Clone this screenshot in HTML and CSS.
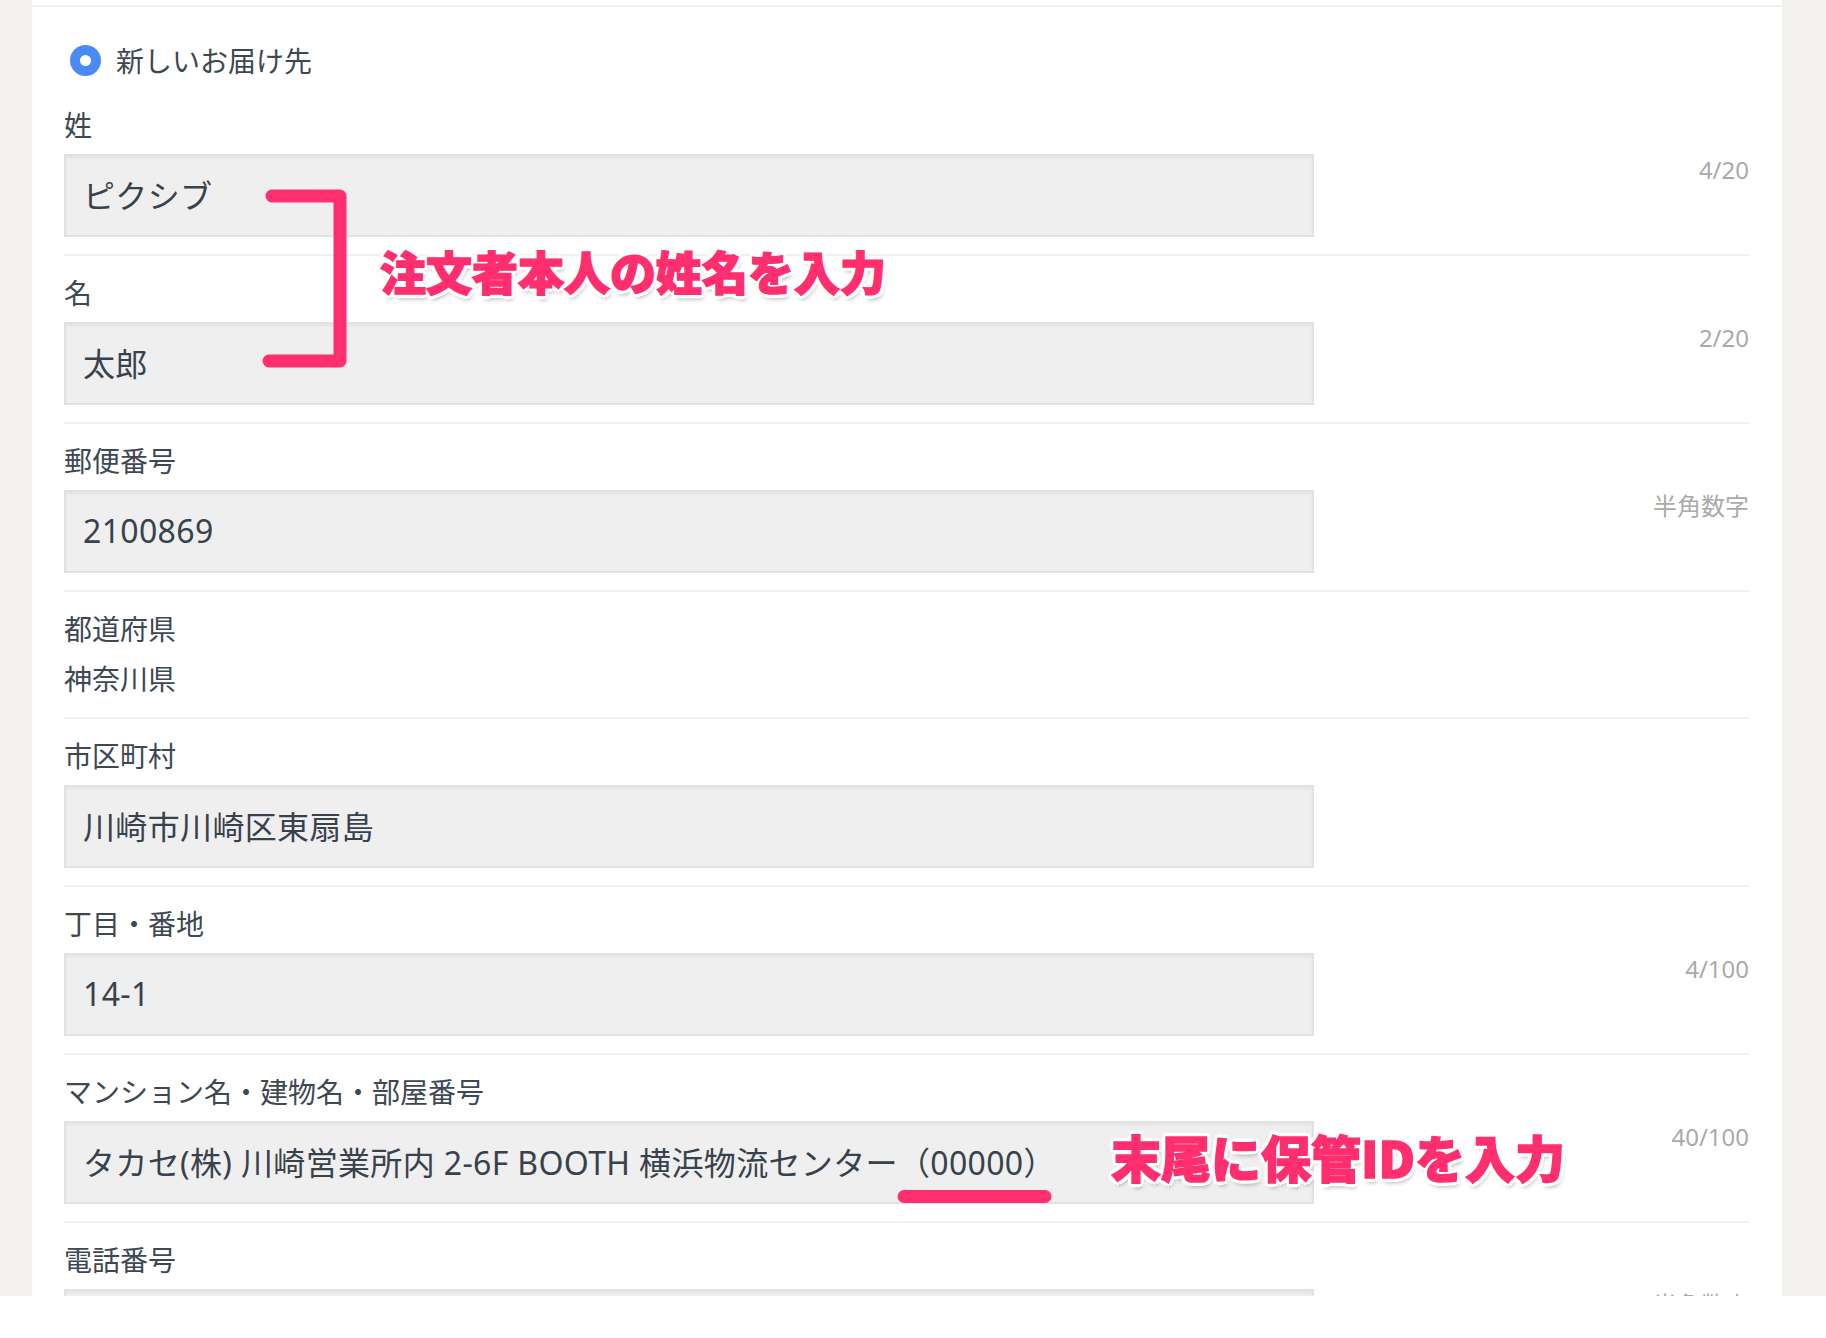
FILE: index.html
```html
<!DOCTYPE html>
<html lang="ja">
<head>
<meta charset="utf-8">
<title>お届け先</title>
<link rel="stylesheet" href="styles.css">
</head>
<body>
<div class="viewport">
  <div class="panel">
    <div class="top-rule"></div>
    <div class="form">
      <div class="radio-row">
        <span class="radio"><span class="radio-dot"></span></span>
        <span class="radio-label">新しいお届け先</span>
      </div>

      <div class="field">
        <div class="label">姓</div>
        <div class="input-row">
          <input class="input" type="text" value="ピクシブ">
          <span class="counter">4/20</span>
        </div>
      </div>

      <div class="field">
        <div class="label">名</div>
        <div class="input-row">
          <input class="input" type="text" value="太郎">
          <span class="counter">2/20</span>
        </div>
      </div>

      <div class="field">
        <div class="label">郵便番号</div>
        <div class="input-row">
          <input class="input" type="text" value="2100869">
          <span class="counter">半角数字</span>
        </div>
      </div>

      <div class="field field-static">
        <div class="label">都道府県</div>
        <div class="value">神奈川県</div>
      </div>

      <div class="field">
        <div class="label">市区町村</div>
        <div class="input-row">
          <input class="input" type="text" value="川崎市川崎区東扇島">
        </div>
      </div>

      <div class="field">
        <div class="label">丁目・番地</div>
        <div class="input-row">
          <input class="input" type="text" value="14-1">
          <span class="counter">4/100</span>
        </div>
      </div>

      <div class="field">
        <div class="label">マンション名・建物名・部屋番号</div>
        <div class="input-row">
          <input class="input" type="text" value="タカセ(株) 川崎営業所内 2-6F BOOTH 横浜物流センター（00000）">
          <span class="counter">40/100</span>
        </div>
      </div>

      <div class="field">
        <div class="label">電話番号</div>
        <div class="input-row">
          <input class="input" type="text" value="">
          <span class="counter">半角数字</span>
        </div>
      </div>
    </div>
  </div>

  <svg class="marks" width="1826" height="1296" viewBox="0 0 1826 1296" aria-hidden="true">
    <path d="M272 196 H340 V361 H269" fill="none" stroke="#ff2e6f" stroke-width="13" stroke-linecap="round" stroke-linejoin="round"/>
    <line x1="904" y1="1196.5" x2="1045" y2="1196.5" stroke="#ff2e6f" stroke-width="13" stroke-linecap="round"/>
  </svg>
  <div class="note note-name">注文者本人の姓名を入力</div>
  <div class="note note-id">末尾に保管IDを入力</div>
</div>
</body>
</html>
```

FILE: styles.css
```css
html, body {
  margin: 0;
  padding: 0;
  background: #ffffff;
}

body {
  font-family: "Noto Sans CJK JP", "Noto Sans", sans-serif;
  color: #3d4852;
}

.viewport {
  position: relative;
  height: 1296px;
  overflow: hidden;
  background: #f4f2ee;
  padding: 0 44px 0 32px;
}

.panel {
  background: #ffffff;
  height: 100%;
  padding-top: 5px;
  box-sizing: border-box;
}

.top-rule {
  height: 2px;
  background: #f3efea;
}

.form {
  padding: 0 33px 0 32px;
}

.radio-row {
  display: flex;
  align-items: center;
  height: 34px;
  padding-top: 36px;
  margin-bottom: 11px;
}

.radio {
  width: 31px;
  height: 31px;
  margin-left: 6px;
  border-radius: 50%;
  background: #4a8af4;
  display: flex;
  align-items: center;
  justify-content: center;
}

.radio-dot {
  width: 11px;
  height: 11px;
  border-radius: 50%;
  background: #ffffff;
}

.radio-label {
  margin-left: 15px;
  font-size: 28px;
  line-height: 34px;
}

.field {
  padding: 19px 0 17px;
  border-bottom: 2px solid #f3efea;
}

.field-static {
  padding-bottom: 22px;
}

.label {
  font-size: 28px;
  line-height: 34px;
  margin-bottom: 13px;
}

.value {
  font-size: 28px;
  line-height: 34px;
  margin-top: 16px;
}

.field-static .label {
  margin-bottom: 0;
}

.input-row {
  display: flex;
  justify-content: space-between;
  align-items: flex-start;
}

.input {
  display: block;
  flex: 0 0 1250px;
  width: 1250px;
  height: 83px;
  box-sizing: border-box;
  margin: 0;
  padding: 0 0 3px 17px;
  border: 2px solid #e2e2e2;
  border-radius: 0;
  background: #efefef;
  box-shadow: inset 0 2px 3px rgba(0, 0, 0, 0.05);
  font-family: "Noto Sans", "Noto Sans CJK JP", sans-serif;
  font-size: 32px;
  letter-spacing: 0.35px;
  color: #38424c;
  outline: none;
}

.counter {
  flex: 0 0 auto;
  font-family: "Noto Sans", "Noto Sans CJK JP", sans-serif;
  font-size: 24px;
  line-height: 32px;
  color: #aaaaaa;
  text-align: right;
  white-space: nowrap;
}

.marks {
  position: absolute;
  left: 0;
  top: 0;
}

.note {
  position: absolute;
  font-family: "Noto Sans CJK JP", sans-serif;
  font-weight: 900;
  line-height: 1.2;
  color: #ff2e6f;
  -webkit-text-stroke: 1.5px #ff2e6f;
  white-space: nowrap;
  text-shadow:
    4px 0 0 #fff, -4px 0 0 #fff, 0 4px 0 #fff, 0 -4px 0 #fff,
    3px 3px 0 #fff, -3px 3px 0 #fff, 3px -3px 0 #fff, -3px -3px 0 #fff,
    2px 5px 4px rgba(0, 0, 0, 0.28);
}

.note-name {
  left: 380px;
  top: 243px;
  font-size: 46px;
}

.note-id {
  left: 1111px;
  top: 1126px;
  font-size: 50px;
}
```
